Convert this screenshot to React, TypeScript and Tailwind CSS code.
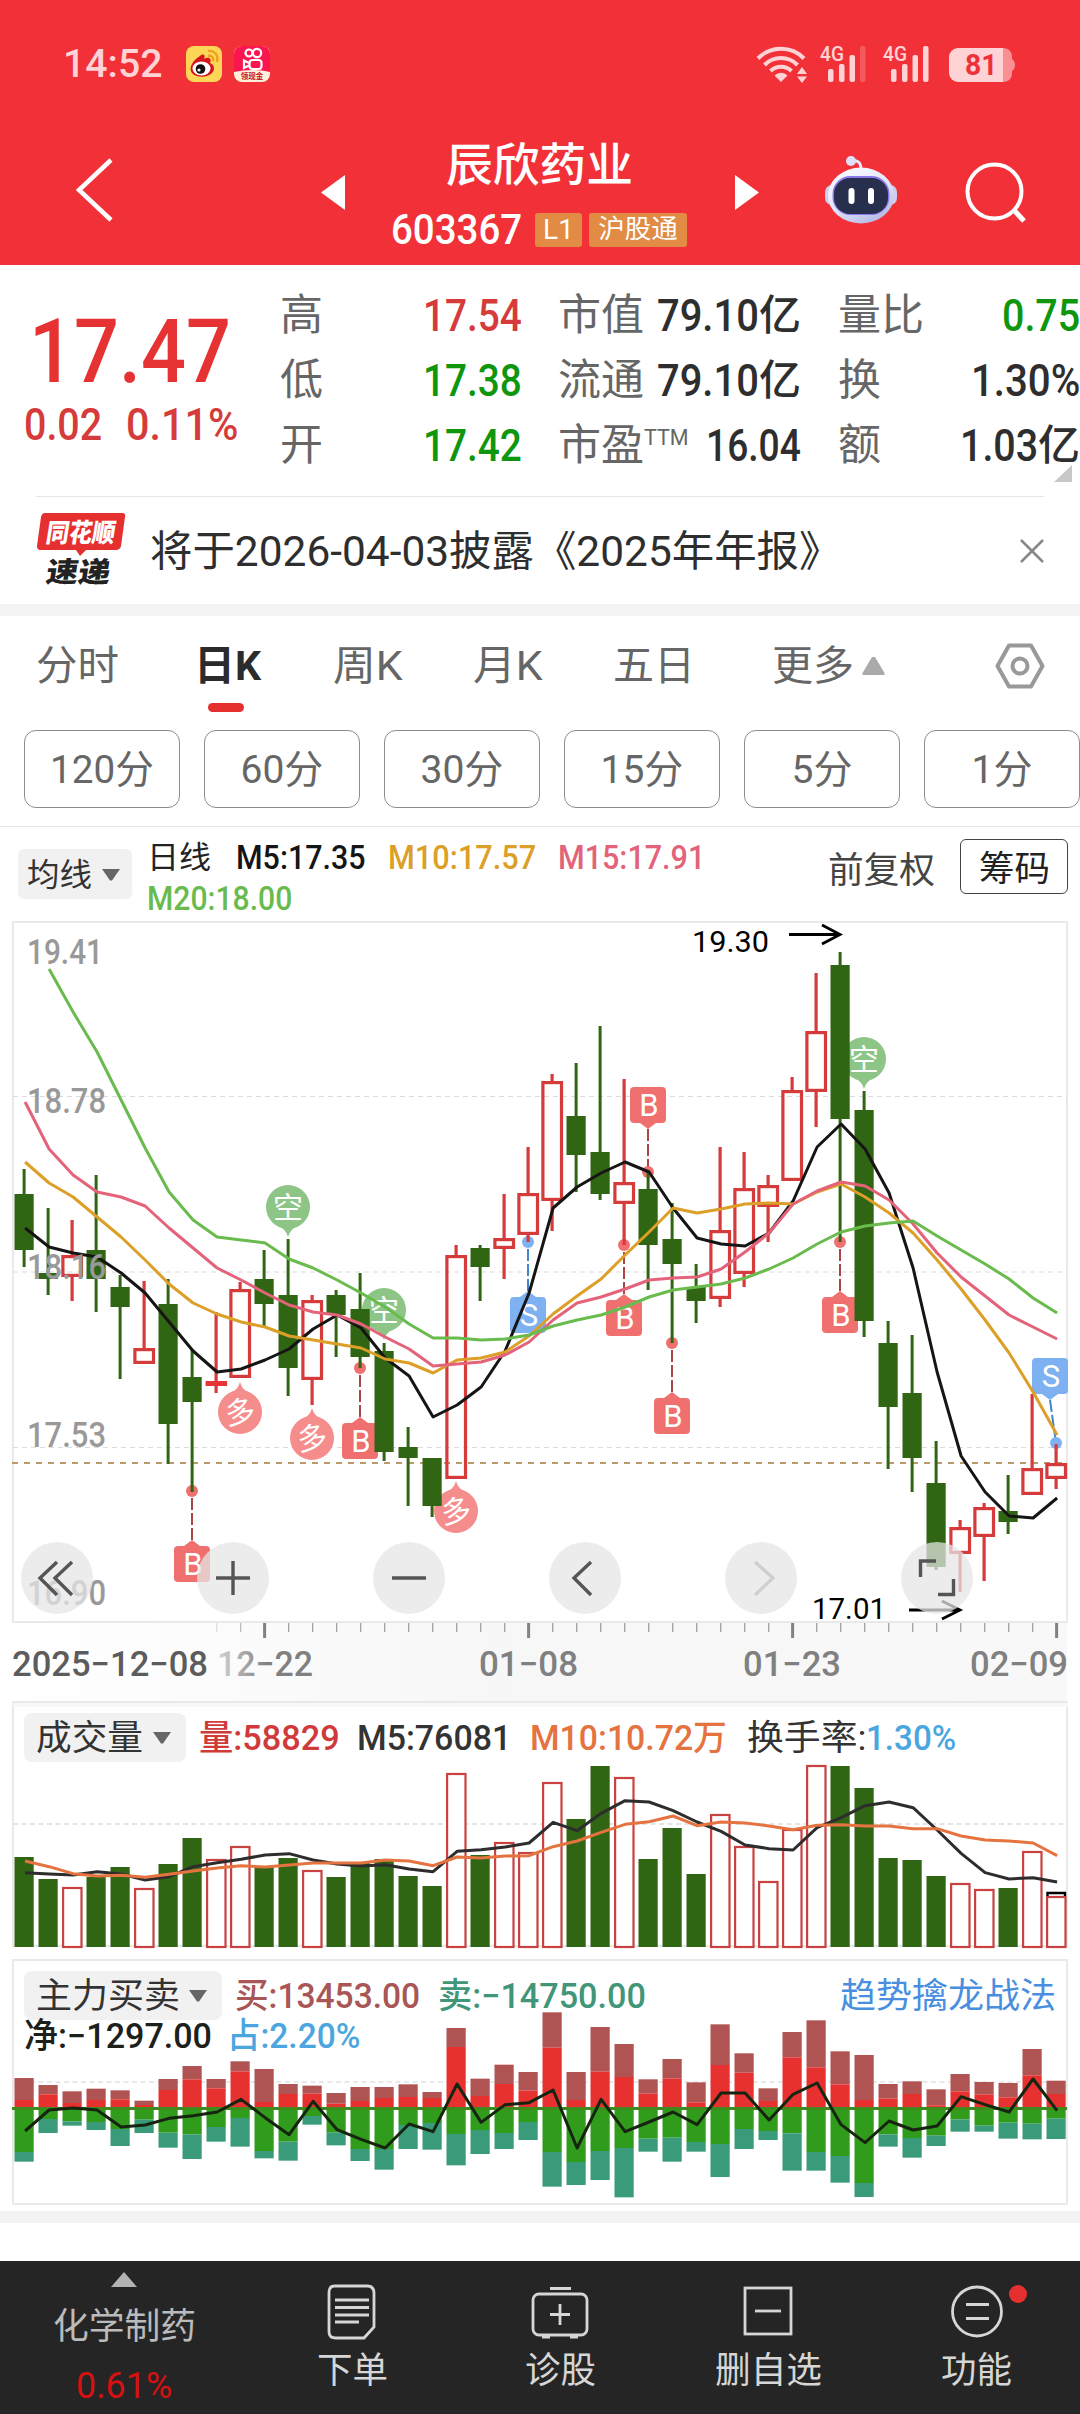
import { useLayoutEffect, useRef, useState } from "react";
import type { ReactNode } from "react";

const FONT = '"Roboto","Noto Sans CJK SC",sans-serif';

/* Stretches or condenses its text horizontally so that it fills the width given by className. */
function Fit({ children, className = "" }: { children: ReactNode; className?: string }) {
  const outer = useRef<HTMLSpanElement>(null);
  const inner = useRef<HTMLSpanElement>(null);
  const [scale, setScale] = useState(1);
  useLayoutEffect(() => {
    const measure = () => {
      if (outer.current && inner.current && inner.current.offsetWidth > 0) {
        setScale(outer.current.clientWidth / inner.current.offsetWidth);
      }
    };
    measure();
    document.fonts?.ready.then(measure);
  }, []);
  return (
    <span ref={outer} className={`inline-block shrink-0 whitespace-nowrap leading-none ${className}`}>
      <span ref={inner} className="inline-block origin-left" style={{ transform: `scaleX(${scale})` }}>
        {children}
      </span>
    </span>
  );
}

const cx = (i: number) => 24.1 + 24 * i;

type Candle = [0 | 1, number, number, number, number];

/* [rising, high, top, bottom, low] */
const candles: Candle[] = [
  [0, 1169, 1194, 1250, 1267], [0, 1208, 1273, 1279, 1295], [1, 1220, 1255, 1277, 1301], [0, 1175, 1250, 1279, 1312],
  [0, 1275, 1287, 1307, 1379], [1, 1281, 1348, 1364, 1364], [0, 1279, 1304, 1424, 1464], [0, 1350, 1377, 1402, 1492],
  [1, 1312, 1381, 1386, 1393], [1, 1282, 1289, 1378, 1378], [0, 1250, 1279, 1304, 1328], [0, 1239, 1295, 1368, 1396],
  [1, 1295, 1300, 1380, 1405], [0, 1290, 1295, 1315, 1357], [0, 1273, 1309, 1357, 1368], [0, 1343, 1351, 1452, 1461],
  [0, 1427, 1447, 1458, 1506], [0, 1458, 1458, 1506, 1517], [1, 1245, 1255, 1479, 1479], [0, 1245, 1248, 1267, 1301],
  [1, 1194, 1238, 1249, 1279], [1, 1147, 1193, 1235, 1242], [1, 1074, 1081, 1201, 1231], [0, 1063, 1116, 1155, 1192],
  [0, 1026, 1152, 1194, 1200], [1, 1079, 1182, 1204, 1245], [0, 1172, 1189, 1245, 1290], [0, 1203, 1239, 1264, 1343],
  [0, 1264, 1287, 1301, 1323], [1, 1147, 1230, 1299, 1307], [1, 1152, 1188, 1274, 1287], [1, 1175, 1185, 1207, 1242],
  [1, 1077, 1090, 1181, 1181], [1, 973, 1031, 1092, 1127], [0, 952, 965, 1119, 1242], [0, 1091, 1110, 1321, 1337],
  [0, 1321, 1343, 1407, 1469], [0, 1335, 1393, 1458, 1492], [0, 1441, 1483, 1567, 1570], [1, 1520, 1527, 1554, 1592],
  [1, 1503, 1507, 1537, 1581], [0, 1475, 1511, 1522, 1534], [1, 1394, 1468, 1495, 1495], [1, 1444, 1463, 1479, 1489],
];

const ma5 = [1228, 1247, 1253, 1257, 1273, 1293, 1322, 1351, 1372, 1369, 1360, 1349, 1329, 1315, 1328, 1358, 1376, 1417, 1405, 1387, 1351, 1293, 1208, 1187, 1173, 1162, 1172, 1208, 1238, 1244, 1246, 1233, 1201, 1147, 1124, 1149, 1193, 1268, 1372, 1456, 1492, 1516, 1518, 1498];
const ma10 = [1162, 1183, 1197, 1217, 1237, 1260, 1284, 1303, 1314, 1322, 1327, 1336, 1340, 1344, 1348, 1359, 1363, 1373, 1360, 1358, 1352, 1336, 1314, 1296, 1279, 1255, 1232, 1208, 1213, 1209, 1204, 1203, 1204, 1192, 1184, 1197, 1213, 1233, 1260, 1289, 1320, 1353, 1392, 1435];
const ma15 = [1102, 1149, 1175, 1192, 1197, 1206, 1228, 1248, 1268, 1280, 1293, 1305, 1312, 1315, 1324, 1337, 1349, 1366, 1364, 1362, 1355, 1342, 1320, 1303, 1297, 1289, 1280, 1278, 1277, 1269, 1252, 1233, 1204, 1191, 1182, 1186, 1200, 1224, 1253, 1277, 1296, 1315, 1327, 1339];
const ma20 = [969, 1012, 1052, 1100, 1148, 1192, 1220, 1237, 1240, 1243, 1259, 1268, 1280, 1293, 1307, 1324, 1338, 1338, 1340, 1339, 1335, 1326, 1320, 1315, 1307, 1297, 1290, 1287, 1284, 1278, 1269, 1258, 1244, 1232, 1226, 1223, 1221, 1236, 1250, 1264, 1279, 1298, 1313];

const volume = [1857, 1879, 1887, 1877, 1867, 1888, 1864, 1838, 1859, 1846, 1866, 1858, 1870, 1877, 1863, 1859, 1876, 1886, 1773, 1855, 1842, 1852, 1782, 1819, 1766, 1777, 1859, 1828, 1874, 1814, 1846, 1881, 1829, 1765, 1766, 1788, 1858, 1860, 1876, 1883, 1889, 1888, 1851, 1896];
const vma5 = [548, 552, 555, 545, 552, 570, 560, 530, 518, 508, 495, 491, 510, 522, 528, 524, 537, 545, 484, 479, 471, 459, 397, 422, 370, 332, 336, 362, 396, 424, 465, 476, 480, 413, 383, 347, 336, 353, 420, 490, 548, 567, 563, 576].map((v) => 1690 + v / 3);
const vma10 = [513, 530, 551, 558, 556, 562, 553, 543, 534, 527, 531, 525, 519, 519, 519, 510, 513, 527, 501, 504, 498, 497, 470, 453, 427, 403, 395, 378, 407, 396, 399, 408, 419, 406, 404, 408, 408, 416, 416, 438, 450, 453, 459, 497].map((v) => 1690 + v / 3);

/* [buy top, strong buy top, strong sell bottom, sell bottom] */
const flow = [
  [384, 450, 606, 635], [405, 433, 507, 549], [424, 459, 514, 527], [416, 450, 516, 540], [421, 448, 537, 588],
  [452, 465, 509, 549], [387, 420, 548, 593], [348, 388, 553, 627], [387, 415, 531, 575], [334, 364, 504, 590],
  [357, 456, 603, 625], [402, 432, 575, 632], [407, 431, 498, 524], [429, 461, 548, 586], [411, 453, 597, 633],
  [411, 444, 597, 659], [403, 441, 525, 597], [426, 444, 519, 599], [234, 291, 552, 646], [386, 438, 540, 612],
  [344, 402, 549, 597], [366, 422, 516, 570], [187, 293, 606, 710], [366, 450, 636, 705], [231, 365, 603, 690],
  [282, 381, 594, 742], [388, 431, 566, 605], [327, 386, 563, 635], [397, 457, 576, 605], [223, 345, 582, 681],
  [310, 368, 537, 597], [415, 453, 543, 570], [246, 322, 550, 662], [211, 352, 606, 662], [304, 403, 618, 698],
  [315, 450, 699, 741], [402, 446, 553, 590], [394, 432, 564, 623], [418, 466, 557, 588], [372, 424, 508, 545],
  [396, 433, 527, 545], [399, 442, 518, 566], [297, 376, 521, 568], [392, 432, 506, 567],
].map((r) => r.map((v) => 1950 + v / 3));
const net = [543, 480, 474, 480, 531, 525, 505, 497, 486, 448, 503, 554, 454, 539, 568, 594, 522, 545, 402, 517, 464, 458, 420, 594, 448, 545, 516, 486, 524, 429, 429, 510, 433, 399, 524, 578, 513, 540, 528, 440, 464, 486, 387, 482].map((v) => 1950 + v / 3);

function Line({ data, color, from = 0 }: { data: number[]; color: string; from?: number }) {
  return (
    <polyline
      points={data.map((y, k) => `${cx(k + from) + 1},${y}`).join(" ")}
      fill="none"
      stroke={color}
      strokeWidth="3"
      strokeLinejoin="round"
    />
  );
}

function Tag({ letter, x, y, up, dot, dotX }: { letter: string; x: number; y: number; up: boolean; dot: number; dotX?: number }) {
  const fill = letter === "B" ? "#f07070" : "#7eb1f1";
  const stem = letter === "B" ? "#a84646" : "#4385cc";
  const tip = up ? y - 6 : y + 42;
  const base = up ? y : y + 36;
  return (
    <g>
      <line x1={x} y1={tip} x2={dotX ?? x} y2={dot} stroke={stem} strokeWidth="2" strokeDasharray="12 3" />
      <circle cx={dotX ?? x} cy={dot} r="6" fill={fill} />
      <rect x={x - 18} y={y} width="36" height="36" rx="4" fill={fill} />
      <path d={`M${x - 8} ${base}L${x} ${tip}L${x + 8} ${base}Z`} fill={fill} />
      <text x={x + 1} y={y + 29} fontSize="31" fill="#fff" textAnchor="middle">{letter}</text>
    </g>
  );
}

function Pin({ label, x, y, up }: { label: string; x: number; y: number; up: boolean }) {
  const fill = up ? "#f58d8d" : "#8cc586";
  const s = up ? -1 : 1;
  return (
    <g>
      <circle cx={x} cy={y} r="22" fill={fill} />
      <path d={`M${x - 10} ${y + s * 19}Q${x - 2} ${y + s * 22} ${x} ${y + s * 30}Q${x + 2} ${y + s * 22} ${x + 10} ${y + s * 19}Z`} fill={fill} />
      <text x={x} y={y + 11} fontSize="30" fill="#fff" textAnchor="middle" fontWeight="400" transform={up ? `rotate(-8 ${x} ${y})` : undefined}>{label}</text>
    </g>
  );
}

function AxisText({ x, y, w, children, color = "#999", size = 35, weight = 500 }: { x: number; y: number; w: number; children: ReactNode; color?: string; size?: number; weight?: number }) {
  return (
    <text x={x} y={y} fontSize={size} fontWeight={weight} fill={color} textLength={w} lengthAdjust="spacingAndGlyphs">
      {children}
    </text>
  );
}

function PriceChart() {
  return (
    <svg className="block h-[780px] w-[1080px]" viewBox="0 921 1080 780" fontFamily={FONT}>
      <defs>
        <linearGradient id="axisBg" x1="0" x2="1" y1="0" y2="0">
          <stop offset="0" stopColor="#fff" />
          <stop offset="0.45" stopColor="#f7f7f7" />
          <stop offset="1" stopColor="#f8f8f8" />
        </linearGradient>
        <linearGradient id="fadeText" gradientUnits="userSpaceOnUse" x1="215" x2="268" y1="0" y2="0">
          <stop offset="0" stopColor="#d8d8d8" />
          <stop offset="1" stopColor="#808080" />
        </linearGradient>
      </defs>
      <rect x="13" y="1622" width="1054" height="80" fill="url(#axisBg)" />
      <rect x="13" y="922" width="1054" height="700" fill="#fff" stroke="#e9e9e9" strokeWidth="2" />
      {[1096.5, 1272, 1447.5].map((y) => (
        <line key={y} x1="13" x2="1067" y1={y} y2={y} stroke="#dcdcdc" strokeWidth="1.2" strokeDasharray="5 4" />
      ))}
      <line x1="12" x2="1067" y1="1463" y2="1463" stroke="#b99a6b" strokeWidth="2" strokeDasharray="6 6" />

      <Tag letter="B" x={192} y={1546} up dot={1491} />
      <Tag letter="B" x={360} y={1423} up dot={1368} />
      <Tag letter="S" x={528} y={1297} up dot={1242} />
      <Tag letter="B" x={624} y={1300} up dot={1245} />
      <Tag letter="B" x={648} y={1087} up={false} dot={1172} />
      <Tag letter="B" x={672} y={1398} up dot={1343} />
      <Tag letter="B" x={840} y={1297} up dot={1242} />
      <Tag letter="S" x={1050} y={1358} up={false} dot={1443} dotX={1056} />
      <Pin label="空" x={288} y={1207} up={false} />
      <Pin label="空" x={384} y={1310} up={false} />
      <Pin label="空" x={864} y={1059} up={false} />
      <Pin label="多" x={240} y={1412} up />
      <Pin label="多" x={312} y={1438} up />
      <Pin label="多" x={456} y={1511} up />

      {candles.map(([rise, h, t, b, l], i) =>
        rise ? (
          <g key={i} stroke="#d63b3b" strokeWidth="3.2" fill="none">
            <path d={`M${cx(i)} ${h}V${t}M${cx(i)} ${b}V${l}`} />
            {b - t < 8 ? (
              <rect x={cx(i) - 10.5} y={t} width="21.5" height={b - t} fill="#e63333" stroke="none" />
            ) : (
              <rect x={cx(i) - 9.2} y={t + 1.6} width="18.6" height={b - t - 3.2} />
            )}
          </g>
        ) : (
          <g key={i} fill="#306613">
            <rect x={cx(i) - 1.5} y={h} width="3" height={l - h} />
            <rect x={cx(i) - 9.6} y={t} width="19.2" height={b - t} />
          </g>
        ),
      )}

      <Line data={ma5} color="#151515" />
      <AxisText x={27} y={964} w={76}>19.41</AxisText>
      <AxisText x={27} y={1113} w={79}>18.78</AxisText>
      <AxisText x={27} y={1279} w={79}>18.16</AxisText>
      <AxisText x={27} y={1447} w={79}>17.53</AxisText>
      <AxisText x={27} y={1605} w={79}>16.90</AxisText>

      <Line data={ma10} color="#dc9f28" />
      <Line data={ma15} color="#e3637a" />
      <Line data={ma20} color="#6abb4e" from={1} />

      <AxisText x={692} y={952} w={77} color="#000" size={30} weight={400}>19.30</AxisText>
      <path d="M789 934.5H840M822 925L840 934.5L822 944" fill="none" stroke="#000" strokeWidth="2.8" />
      <AxisText x={812} y={1618.5} w={74} color="#000" size={30} weight={400}>17.01</AxisText>
      <path d="M909 1610H960M942 1601L960 1610L942 1619" fill="none" stroke="#000" strokeWidth="2.8" />

      {[57, 233, 409, 585, 761, 937].map((x) => (
        <circle key={x} cx={x} cy="1578" r="36" fill="#e6e6e6" fillOpacity="0.74" />
      ))}
      <g fill="none" stroke="#555" strokeWidth="3.4">
        <path d="M57 1562L40 1578L57 1595M72 1562L55 1578L72 1595" />
        <path d="M216 1578H250M233 1561V1595" />
        <path d="M392 1578H426" />
        <path d="M591 1562L574 1578L591 1595" />
        <path d="M755 1562L773 1578L755 1595" stroke="#cfcfcf" />
        <path d="M936 1561H920.5V1577M938 1594.5H953.5V1579" />
      </g>

      {candles.map((_, i) => {
        if (i < 8) return null;
        const major = i % 11 === 10;
        return (
          <rect
            key={i}
            x={cx(i) + (major ? -1 : 0)}
            y="1623"
            width={major ? 3 : 1.2}
            height={major ? 15 : 9}
            fill={i === 8 ? "#ddd" : i === 9 ? "#b5b5b5" : major ? "#828282" : "#999"}
          />
        );
      })}
      <AxisText x={12} y={1676} w={196} color="#5c5c5c">2025−12−08</AxisText>
      <AxisText x={217} y={1676} w={96} color="url(#fadeText)">12−22</AxisText>
      <AxisText x={479} y={1676} w={99} color="#808080">01−08</AxisText>
      <AxisText x={743} y={1676} w={98} color="#808080">01−23</AxisText>
      <AxisText x={970} y={1676} w={98} color="#808080">02−09</AxisText>
    </svg>
  );
}

function VolumeChart() {
  return (
    <svg className="absolute inset-0 h-[258px] w-[1080px]" viewBox="0 1701 1080 258">
      <rect x="13" y="1702" width="1054" height="244" fill="#fff" stroke="#e9e9e9" strokeWidth="2" />
      <rect x="13" y="1703" width="1055" height="4" fill="#f8f8f8" />
      <line x1="13" x2="1067" y1="1824" y2="1824" stroke="#e4e4e4" strokeWidth="2" strokeDasharray="5 3.5" />
      {volume.map((t, i) =>
        candles[i][0] ? (
          <rect key={i} x={cx(i) - 9} y={t + 1} width="18.4" height={1946 - t} fill="#fff" stroke="#c94141" strokeWidth="2.2" />
        ) : (
          <rect key={i} x={cx(i) - 9.6} y={t} width="19.2" height={1947 - t} fill="#306613" />
        ),
      )}
      <path d="M1047.5 1896V1893H1065V1896" fill="none" stroke="#000" strokeWidth="2.4" />
      <Line data={vma5} color="#2d2d2d" />
      <Line data={vma10} color="#e5733f" />
    </svg>
  );
}

function FlowChart() {
  return (
    <svg className="absolute inset-0 h-[252px] w-[1080px]" viewBox="0 1959 1080 252">
      <rect x="13" y="1960" width="1054" height="244" fill="#fff" stroke="#e9e9e9" strokeWidth="2" />
      <line x1="13" x2="1067" y1="2082" y2="2082" stroke="#e8e8e8" strokeWidth="2" strokeDasharray="5 3.5" />
      {flow.map(([a, b, c, d], i) => (
        <g key={i}>
          <rect x={cx(i) - 9.6} y={a} width="19.2" height={b - a} fill="#b05353" />
          <rect x={cx(i) - 9.6} y={b} width="19.2" height={2108 - b} fill="#e73030" />
          <rect x={cx(i) - 9.6} y={2108} width="19.2" height={c - 2108} fill="#319c1c" />
          <rect x={cx(i) - 9.6} y={c} width="19.2" height={d - c} fill="#3a9b7b" />
        </g>
      ))}
      <rect x="12" y="2107" width="1055" height="3" fill="#3f8a1e" />
      <Line data={net} color="#16250f" />
    </svg>
  );
}

function Down({ className = "" }: { className?: string }) {
  return (
    <svg className={`h-[12px] w-[18px] shrink-0 ${className}`} viewBox="0 0 18 12">
      <path d="M0 0H18L10 11.5H8Z" fill="#666" />
    </svg>
  );
}

function StatusBar() {
  return (
    <div className="flex h-[130px] items-start pt-[46px]">
      <Fit className="ml-[63px] mt-[-1px] w-[99px] text-[38px] font-medium text-[#ffd3d5]">14:52</Fit>
      <svg className="ml-[24px] h-[36px] w-[36px]" viewBox="0 0 36 36">
        <rect width="36" height="36" rx="8" fill="#fbd657" />
        <path d="M14 10C17 7 20 9 18 13C23 10 26 13 24 17C29 19 29 24 26 27C21 32 10 32 6 27C2 22 7 14 14 10Z" fill="#d9141e" />
        <ellipse cx="15.500" cy="22.500" rx="9" ry="7" fill="#fff" />
        <circle cx="14.500" cy="23" r="4.800" fill="#111" />
        <circle cx="13" cy="24" r="1.600" fill="#fff" />
        <path d="M22 5C28 4 33 9 31 16M22 10C26 9 28 12 27 15" fill="none" stroke="#f0a020" strokeWidth="2.400" />
      </svg>
      <svg className="ml-[12px] h-[36px] w-[36px]" viewBox="0 0 36 36" fontFamily={FONT}>
        <rect width="36" height="36" rx="8" fill="#fff0dc" />
        <path d="M0 26V8A8 8 0 0 1 8 0H28A8 8 0 0 1 36 8V26Q18 22 0 26Z" fill="#fb1650" />
        <g fill="none" stroke="#fff" strokeWidth="2.200">
          <circle cx="15" cy="7" r="3.500" />
          <circle cx="23" cy="7" r="4.200" />
          <rect x="15.500" y="14" width="12" height="9" rx="3" />
          <path d="M15 17L10 14.500V22L15 19.500" />
        </g>
        <text x="18" y="33" fontSize="7.500" fontWeight="700" fill="#c41224" textAnchor="middle">领现金</text>
      </svg>
      <svg className="ml-[486px] mt-[-1px] h-[38px] w-[52px]" viewBox="0 0 52 38">
        <g fill="none" stroke="#ffd3d5" strokeWidth="4">
          <path d="M2 13.500A32 32 0 0 1 48 13.500" />
          <path d="M8.500 20A23 23 0 0 1 41.500 20" />
          <path d="M14.500 26A15 15 0 0 1 35.500 26" />
        </g>
        <path d="M25 37L18.500 30.500A9 9 0 0 1 31.500 30.500Z" fill="#ffd3d5" />
        <path d="M41 29L46 22L51 29ZM41 31.500H51L46 38Z" fill="#ffd3d5" />
      </svg>
      <Signal dim className="ml-[11px]" />
      <Signal className="ml-[13px]" />
      <div className="ml-[17px] mt-[2px] flex">
        <div className="flex h-[34px] w-[54px] items-center justify-center rounded-l-[9px] bg-[#ffd3d5] text-[30px] font-bold leading-none text-[#f03038]">
          <Fit className="ml-[9px] w-[32px]">81</Fit>
        </div>
        <svg className="h-[34px] w-[13px]" viewBox="0 0 13 34">
          <path d="M0 0C6 0 9 4 9 9V11C13 13 13 21 9 23V25C9 30 6 34 0 34Z" fill="#f98e93" />
        </svg>
      </div>
    </div>
  );
}

function Signal({ dim = false, className = "" }: { dim?: boolean; className?: string }) {
  return (
    <svg className={`mt-[-8px] h-[46px] w-[50px] shrink-0 ${className}`} viewBox="0 -8 50 46" fontFamily={FONT}>
      <text x="1" y="15" fontSize="21" fontWeight="500" fill="#ffd3d5" textLength="24" lengthAdjust="spacingAndGlyphs">4G</text>
      <g fill="#ffd3d5">
        <rect x="9" y="23" width="5.500" height="13" rx="2" />
        <rect x="20" y="18" width="5.500" height="18" rx="2" />
        <rect x="30.500" y="9" width="5.500" height="27" rx="2" />
        <rect x="41" y="0" width="5.500" height="36" rx="2" fillOpacity={dim ? 0.25 : 1} />
      </g>
    </svg>
  );
}

function NavBar() {
  return (
    <div className="flex h-[135px] items-start text-white">
      <svg className="ml-[76px] mt-[28px] h-[64px] w-[38px]" viewBox="0 0 38 64">
        <path d="M35 2L3 32L35 62" fill="none" stroke="#fff" strokeWidth="4.500" />
      </svg>
      <svg className="ml-[207px] mt-[45px] h-[35px] w-[25px]" viewBox="0 0 25 35">
        <path d="M24 0V35L0 17.500Z" fill="#fff" />
      </svg>
      <div className="ml-[45px] flex w-[296px] flex-col items-center pt-[12px]">
        <div className="flex h-[46px] items-center text-[46px] font-medium leading-none">
          <Fit className="w-[187px]">辰欣药业</Fit>
        </div>
        <div className="mt-[25px] flex h-[34px] items-center">
          <Fit className="w-[131px] text-[42px] font-medium">603367</Fit>
          <div className="ml-[13px] flex h-[34px] w-[47px] items-center justify-center rounded-[3px] bg-[#e18b45] text-[28px] leading-none">
            L1
          </div>
          <div className="ml-[7px] flex h-[34px] w-[98px] items-center justify-center rounded-[3px] bg-[#e18b45] pb-[1px] text-[26.5px] leading-none">
            沪股通
          </div>
        </div>
      </div>
      <svg className="ml-[48px] mt-[45px] h-[35px] w-[25px]" viewBox="0 0 25 35">
        <path d="M0 0V35L24 17.500Z" fill="#fff" />
      </svg>
      <svg className="ml-[64px] mt-[26px] h-[68px] w-[74px]" viewBox="0 0 74 68">
        <defs>
          <linearGradient id="bot" x1="0" y1="0" x2="0.600" y2="1">
            <stop offset="0" stopColor="#fff" />
            <stop offset="0.600" stopColor="#e2e4f8" />
            <stop offset="1" stopColor="#b9bde6" />
          </linearGradient>
        </defs>
        <path d="M28 5Q37 3 37 14" fill="none" stroke="#e8e6ff" strokeWidth="3" />
        <circle cx="27" cy="5" r="5" fill="#dfe0fa" />
        <rect x="1" y="29" width="72" height="20" rx="7" fill="#cdcff0" />
        <ellipse cx="37" cy="39.500" rx="33" ry="28" fill="url(#bot)" />
        <rect x="8.500" y="20" width="57" height="39" rx="18" fill="#8a78ea" />
        <rect x="10" y="22" width="54" height="36" rx="16" fill="#272f4c" />
        <rect x="24.500" y="32" width="6" height="16" rx="3" fill="#fff" />
        <rect x="44" y="32" width="6" height="16" rx="3" fill="#fff" />
      </svg>
      <svg className="ml-[66px] mt-[32px] h-[62px] w-[64px]" viewBox="0 0 64 62">
        <circle cx="30.500" cy="29.500" r="27" fill="none" stroke="#fff" strokeWidth="4" />
        <path d="M49 47L60 59" stroke="#fff" strokeWidth="5" />
      </svg>
    </div>
  );
}

function Quote() {
  const label = "text-[43px] leading-none text-[#666]";
  return (
    <section className="relative flex h-[232px] bg-white">
      <div className="w-[280px] pt-[42px] font-medium text-[#e63232]">
        <Fit className="ml-[29px] block w-[202px] text-[89px]">17.47</Fit>
        <div className="mt-[6px] flex text-[#d63b3b]">
          <Fit className="ml-[24px] w-[78px] text-[45px]">0.02</Fit>
          <Fit className="ml-[24px] w-[112px] text-[45px]">0.11%</Fit>
        </div>
      </div>
      <div className="w-[242px] pt-[18px] font-medium">
        {[
          ["高", "17.54", "text-[#d63b3b]"],
          ["低", "17.38", "text-[#0e960e]"],
          ["开", "17.42", "text-[#0e960e]"],
        ].map(([k, v, c]) => (
          <div key={k} className="flex h-[65px] items-center justify-between">
            <span className={`${label} font-normal`}>{k}</span>
            <Fit className={`w-[99px] text-[45px] ${c}`}>{v}</Fit>
          </div>
        ))}
      </div>
      <div className="ml-[36px] w-[243px] pt-[18px] font-medium text-[#2e2e2e]">
        {["市值", "流通"].map((k) => (
          <div key={k} className="flex h-[65px] items-center justify-between">
            <span className={`${label} font-normal`}>{k}</span>
            <span className="flex items-center">
              <Fit className="w-[102px] text-[45px]">79.10</Fit>
              <span className="text-[42px] leading-none">亿</span>
            </span>
          </div>
        ))}
        <div className="flex h-[65px] items-center justify-between">
          <span className={`${label} flex font-normal`}>
            市盈<Fit className="mt-[3px] w-[45px] text-[22px]">TTM</Fit>
          </span>
          <Fit className="w-[95px] text-[45px]">16.04</Fit>
        </div>
      </div>
      <div className="ml-[37px] w-[242px] pt-[18px] font-medium text-[#2e2e2e]">
        <div className="flex h-[65px] items-center justify-between">
          <span className={`${label} font-normal`}>量比</span>
          <Fit className="w-[78px] text-[45px] text-[#0e960e]">0.75</Fit>
        </div>
        <div className="flex h-[65px] items-center justify-between">
          <span className={`${label} font-normal`}>换</span>
          <Fit className="w-[109px] text-[45px]">1.30%</Fit>
        </div>
        <div className="flex h-[65px] items-center justify-between">
          <span className={`${label} font-normal`}>额</span>
          <span className="flex items-center">
            <Fit className="w-[78px] text-[45px]">1.03</Fit>
            <span className="text-[42px] leading-none">亿</span>
          </span>
        </div>
      </div>
      <svg className="absolute bottom-[15px] right-[8px] h-[17px] w-[18px]" viewBox="0 0 18 17">
        <path d="M18 0V17H0Z" fill="#c8c8c8" />
      </svg>
      <div className="absolute bottom-0 left-[36px] h-px w-[1008px] bg-[#e6e6e6]" />
    </section>
  );
}

function News() {
  return (
    <section className="flex h-[107px] items-center bg-white">
      <svg className="ml-[36px] mt-[-3px] h-[90px] w-[96px]" viewBox="36 505 96 90" fontFamily={FONT}>
        <path d="M45 514H122Q126 514 125 518L121 547Q120 551 116 551H86L80 557L76 551H40Q37 551 37 547L41 518Q42 514 45 514Z" fill="#e63030" />
        <text transform="translate(45 543) skewX(-9)" fontSize="26" fontWeight="900" fill="#fff" textLength="69" lengthAdjust="spacingAndGlyphs">同花顺</text>
        <text transform="translate(45 583) skewX(-9)" fontSize="28" fontWeight="900" fill="#222" textLength="64" lengthAdjust="spacingAndGlyphs">速递</text>
      </svg>
      <Fit className="ml-[18px] mt-[2px] w-[691px] text-[42px] text-[#2e2e2e]">将于2026-04-03披露《2025年年报》</Fit>
      <svg className="ml-[178px] h-[26px] w-[26px]" viewBox="0 0 26 26">
        <path d="M2 2L24 24M24 2L2 24" stroke="#888" strokeWidth="2.600" />
      </svg>
    </section>
  );
}

function Tabs() {
  return (
    <div className="flex h-[114px] items-start bg-white pt-[25px] text-[41px] leading-none text-[#666]">
      <div className="flex h-[50px] w-full items-center">
        <Fit className="ml-[36px] w-[83px]">分时</Fit>
        <div className="relative ml-[75px] flex items-center font-bold text-[#2b2b2b]">
          <Fit className="w-[67px]">日K</Fit>
          <span className="absolute left-[14px] top-[57px] h-[9px] w-[36px] rounded-full bg-[#e63030]" />
        </div>
        <Fit className="ml-[72px] w-[70px]">周K</Fit>
        <Fit className="ml-[70px] w-[70px]">月K</Fit>
        <Fit className="ml-[70px] w-[82px]">五日</Fit>
        <Fit className="ml-[77px] w-[82px]">更多</Fit>
        <svg className="ml-[8px] h-[18px] w-[23px]" viewBox="0 0 23 18">
          <path d="M10 0H13L22.500 16V18H0.500V16Z" fill="#aaa" />
        </svg>
        <svg className="ml-[110px] h-[46px] w-[50px]" viewBox="0 0 50 46">
          <path d="M14 2.500H36L47.500 23L36 43.500H14L2.500 23Z" fill="none" stroke="#999" strokeWidth="4" strokeLinejoin="round" />
          <circle cx="25" cy="23" r="7.500" fill="none" stroke="#999" strokeWidth="4" />
        </svg>
      </div>
    </div>
  );
}

function Periods() {
  return (
    <div className="flex h-[97px] gap-[24px] border-b border-[#e6e6e6] bg-white pl-[24px]">
      {[
        ["120分", "w-[104px]"],
        ["60分", "w-[83px]"],
        ["30分", "w-[83px]"],
        ["15分", "w-[83px]"],
        ["5分", "w-[61px]"],
        ["1分", "w-[61px]"],
      ].map(([t, w]) => (
        <div key={t} className="flex h-[78px] w-[156px] shrink-0 items-center justify-center rounded-[12px] border border-[#8c8c8c] pt-[3px] text-[39px] text-[#666]">
          <Fit className={w}>{t}</Fit>
        </div>
      ))}
    </div>
  );
}

function Indicators() {
  return (
    <div className="flex h-[94px] items-start bg-white font-medium">
      <div className="ml-[18px] mt-[22px] flex h-[50px] w-[114px] items-center rounded-[6px] bg-[#f1f1f1] pl-[9px] pt-[1px] text-[32px] font-normal text-[#333]">
        <Fit className="w-[65px]">均线</Fit>
        <Down className="ml-[10px]" />
      </div>
      <div className="ml-[15px] w-[660px] pt-[11px] text-[33px]">
        <div className="flex h-[38px] items-center">
          <Fit className="w-[64px] text-[31px] font-normal text-[#222]">日线</Fit>
          <Fit className="ml-[25px] w-[130px] text-[#151515]">M5:17.35</Fit>
          <Fit className="ml-[22px] w-[148px] text-[#dc9f28]">M10:17.57</Fit>
          <Fit className="ml-[22px] w-[147px] text-[#e3637a]">M15:17.91</Fit>
        </div>
        <div className="flex h-[44px] items-center">
          <Fit className="w-[145px] text-[#6abb4e]">M20:18.00</Fit>
        </div>
      </div>
      <Fit className="ml-[21px] mt-[26px] w-[107px] text-[36px] font-normal text-[#444]">前复权</Fit>
      <div className="ml-[25px] mt-[12px] flex h-[55px] w-[108px] items-center justify-center rounded-[6px] border-[1.5px] border-[#444] pt-[5px] text-[35px] font-normal text-[#222]">
        <Fit className="w-[71px]">筹码</Fit>
      </div>
    </div>
  );
}

function VolumePanel() {
  return (
    <section className="relative h-[258px]">
      <VolumeChart />
      <div className="relative flex h-[72px] items-center text-[35px] font-medium">
        <div className="ml-[24px] flex h-[49px] w-[162px] items-center rounded-[8px] bg-[#f1f1f1] pl-[12px] pt-[2px] font-normal text-[#333]">
          <Fit className="w-[107px]">成交量</Fit>
          <Down className="ml-[10px]" />
        </div>
        <div className="flex items-center pt-[3px]">
          <Fit className="ml-[13px] w-[141px] text-[#d03a3a]">量:58829</Fit>
          <Fit className="ml-[17px] w-[154px] text-[#333]">M5:76081</Fit>
          <Fit className="ml-[19px] w-[197px] text-[#e5733f]">M10:10.72万</Fit>
          <Fit className="ml-[20px] w-[119px] font-normal text-[#333]">换手率:</Fit>
          <Fit className="w-[90px] text-[#4ba6e0]">1.30%</Fit>
        </div>
      </div>
    </section>
  );
}

function FlowPanel() {
  return (
    <section className="relative h-[252px]">
      <FlowChart />
      <div className="relative flex h-[72px] items-center text-[35px] font-medium">
        <div className="ml-[24px] flex h-[49px] w-[198px] items-center rounded-[8px] bg-[#f1f1f1] pl-[12px] pt-[2px] font-normal text-[#333]">
          <Fit className="w-[144px]">主力买卖</Fit>
          <Down className="ml-[9px]" />
        </div>
        <div className="flex items-center pt-[3px]">
          <Fit className="ml-[13px] w-[185px] text-[#a95656]">买:13453.00</Fit>
          <Fit className="ml-[18px] w-[208px] text-[#419579]">卖:−14750.00</Fit>
          <Fit className="ml-[194px] w-[216px] font-normal text-[#4a8fdf]">趋势擒龙战法</Fit>
        </div>
      </div>
      <div className="relative mt-[-15px] flex h-[40px] items-center text-[35px] font-medium">
        <Fit className="ml-[24px] w-[188px] text-[#1d211b]">净:−1297.00</Fit>
        <Fit className="ml-[15px] w-[133px] text-[#4ba6e0]">占:2.20%</Fit>
      </div>
    </section>
  );
}

function BottomNav() {
  const icons: [string, string, ReactNode][] = [
    ["下单", "w-[71px]", (
      <>
        <path d="M11 3H43Q50 3 50 10V44L40 55H12Q5 55 5 49V9Q5 3 11 3Z" transform="translate(1 0)" />
        <path d="M12 17H46M12 24.500H46M12 32H46M12 39H36" />
      </>
    )],
    ["诊股", "w-[71px]", (
      <>
        <rect x="2" y="11" width="54" height="41" rx="6" />
        <path d="M19 5.500H40M29 21V42M19 31.500H39M11 54H19M39 54H47" />
      </>
    )],
    ["删自选", "w-[107px]", (
      <>
        <rect x="6" y="5" width="46" height="46" />
        <path d="M16 28H42" />
      </>
    )],
    ["功能", "w-[71px]", (
      <>
        <circle cx="30" cy="28.500" r="24.500" />
        <path d="M19 21.500H42M19 35.500H42" />
      </>
    )],
  ];
  return (
    <nav className="flex h-[153px] bg-[#252525] text-[#d6d6d6]">
      <div className="flex w-[248px] flex-col items-center pt-[11px]">
        <svg className="h-[15px] w-[26px]" viewBox="0 0 26 15">
          <path d="M13 0L26 15H0Z" fill="#b3b3b3" />
        </svg>
        <div className="mt-[18px] flex h-[44px] items-center">
          <Fit className="w-[143px] text-[36px] text-[#bbb]">化学制药</Fit>
        </div>
        <Fit className="mt-[18px] w-[96px] text-[37px] text-[#d41212]">0.61%</Fit>
      </div>
      {icons.map(([t, w, icon]) => (
        <div key={t} className="relative flex w-[208px] flex-col items-center pt-[22px]">
          <svg className="h-[57px] w-[58px]" viewBox="0 0 58 57" fill="none" stroke="#d6d6d6" strokeWidth="2.800">
            {icon}
          </svg>
          <div className="mt-[9px] flex h-[44px] items-center text-[36px]">
            <Fit className={w}>{t}</Fit>
          </div>
          {t === "功能" && <span className="absolute left-[137px] top-[24px] h-[18px] w-[18px] rounded-full bg-[#e63030]" />}
        </div>
      ))}
    </nav>
  );
}

export default function App() {
  return (
    <div className='h-[2414px] w-[1080px] overflow-hidden bg-white font-["Roboto","Noto_Sans_CJK_SC",sans-serif]'>
      <header className="h-[265px] bg-[#f13137]">
        <StatusBar />
        <NavBar />
      </header>
      <Quote />
      <News />
      <div className="h-[12px] bg-[#f3f3f3]" />
      <Tabs />
      <Periods />
      <Indicators />
      <PriceChart />
      <VolumePanel />
      <FlowPanel />
      <div className="h-[12px] bg-[#f3f3f3]" />
      <div className="h-[38px] bg-white" />
      <BottomNav />
    </div>
  );
}
